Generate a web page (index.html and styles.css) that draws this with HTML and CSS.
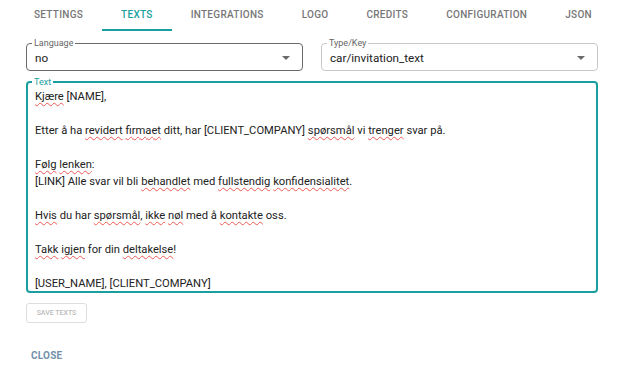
FILE: index.html
```html
<!DOCTYPE html>
<html lang="no">
<head>
  <meta charset="UTF-8" />
  <title>Texts</title>
  <link rel="stylesheet" href="styles.css">
</head>
<body>
  <div class="tabs">
    <div class="tab">Settings</div>
    <div class="tab active">Texts</div>
    <div class="tab">Integrations</div>
    <div class="tab">Logo</div>
    <div class="tab">Credits</div>
    <div class="tab">Configuration</div>
    <div class="tab">JSON</div>
  </div>

  <div class="container">
    <div class="row">
      <fieldset class="field dark">
        <legend>Language</legend>
        <div class="select">
          <span>no</span>
          <span class="arrow"></span>
        </div>
      </fieldset>
      <fieldset class="field">
        <legend>Type/Key</legend>
        <div class="select">
          <span>car/invitation_text</span>
          <span class="arrow"></span>
        </div>
      </fieldset>
    </div>

    <fieldset class="field focused">
      <legend>Text</legend>
      <div class="text-body"><span class="sp">Kjære</span> [NAME],

Etter å ha <span class="sp">revidert</span> <span class="sp">firmaet</span> ditt, har [CLIENT_COMPANY] <span class="sp">spørsmål</span> vi <span class="sp">trenger</span> svar på.

<span class="sp">Følg</span> <span class="sp">lenken</span>:
[LINK] Alle svar vil bli <span class="sp">behandlet</span> med <span class="sp">fullstendig</span> <span class="sp">konfidensialitet</span>.

<span class="sp">Hvis</span> du har <span class="sp">spørsmål</span>, <span class="sp">ikke</span> <span class="sp">nøl</span> med å <span class="sp">kontakte</span> oss.

<span class="sp">Takk</span> <span class="sp">igjen</span> for din <span class="sp">deltakelse</span>!

[USER_NAME], [CLIENT_COMPANY]</div>
    </fieldset>

    <button class="save-btn" disabled>Save texts</button>

    <div class="actions">
      <button class="close-btn">Close</button>
    </div>
  </div>
</body>
</html>
```

FILE: styles.css
```css
body {
  margin: 0;
  font-family: Roboto, "Liberation Sans", sans-serif;
  color: #222;
  background: #fff;
}

.tabs {
  display: flex;
  padding-left: 15px;
  height: 31px;
}

.tab {
  padding: 0 19px;
  line-height: 30px;
  font-size: 10px;
  font-weight: 500;
  letter-spacing: 0.28px;
  text-transform: uppercase;
  color: #777;
  border-bottom: 2px solid transparent;
}

.tab.active {
  color: #1a9fa0;
  border-bottom-color: #1a9fa0;
}

.container {
  padding: 7px 26px 0;
}

.row {
  display: flex;
  gap: 18px;
}

.field {
  flex: 1;
  margin: 0;
  padding: 0 8px;
  border: 1px solid #c8c8c8;
  border-radius: 4px;
  min-width: 0;
}

.field.dark {
  border-color: #6a6a6a;
}

.field legend {
  font-size: 9px;
  line-height: 10px;
  color: #666;
  padding: 0 2px;
  margin-left: -3px;
}

.select {
  display: flex;
  align-items: center;
  justify-content: space-between;
  height: 19px;
  font-size: 11.7px;
  padding-bottom: 3px;
}

.arrow {
  width: 0;
  height: 0;
  margin-right: 4px;
  border-left: 4px solid transparent;
  border-right: 4px solid transparent;
  border-top: 4px solid #6a6a6a;
}

.field.focused {
  margin-top: 6px;
  border: 2px solid #1a9fa0;
  padding: 0 7px;
}

.field.focused legend {
  color: #1a9fa0;
}

.text-body {
  white-space: pre-wrap;
  font-size: 11.2px;
  line-height: 17px;
  height: 203px;
  overflow: hidden;
  padding-top: 1px;
  color: #222;
}

.sp {
  text-decoration: underline wavy #ec5a55;
  text-decoration-thickness: 1px;
  text-underline-offset: 2px;
}

.save-btn {
  display: block;
  margin-top: 10px;
  width: 61px;
  height: 20px;
  padding: 0;
  font-family: inherit;
  font-size: 7px;
  font-weight: 500;
  text-transform: uppercase;
  color: #bbb;
  background: #fff;
  border: 1px solid #ddd;
  border-radius: 3px;
}

.actions {
  margin-top: 21px;
}

.close-btn {
  padding: 0 5px;
  font-family: inherit;
  font-size: 10px;
  font-weight: 700;
  letter-spacing: 0.2px;
  text-transform: uppercase;
  color: #7391ab;
  background: none;
  border: none;
  line-height: 18px;
}
```
